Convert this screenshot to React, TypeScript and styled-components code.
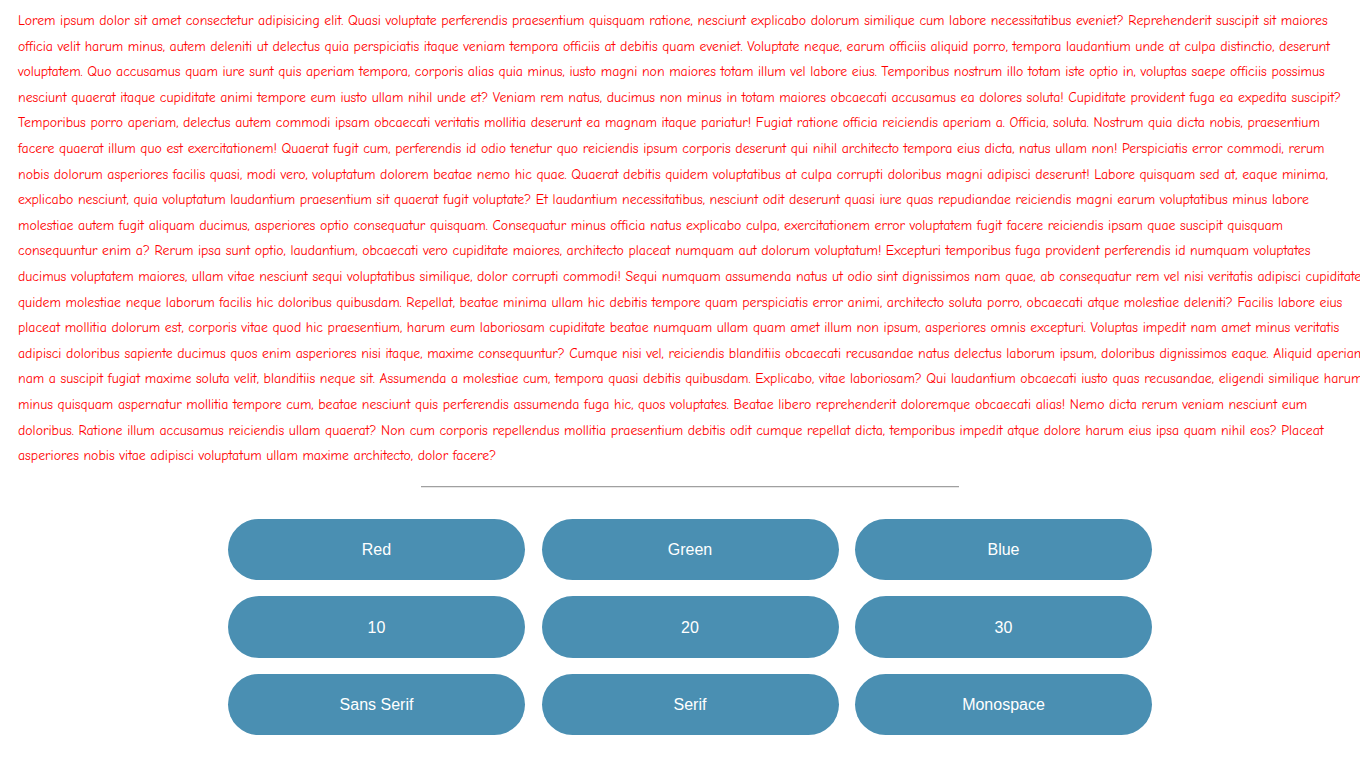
import React from "react";
import styled, { createGlobalStyle } from "styled-components";

const GlobalStyle = createGlobalStyle`
  html, body {
    overflow-x: hidden;
  }
  body {
    margin: 0;
    background: #ffffff;
    font-family: "Liberation Sans", Arial, sans-serif;
  }
`;

const Page = styled.div`
  width: 1344px;
  padding: 8px 0 0 18px;
`;

const Paragraph = styled.p`
  margin: 0;
  color: #ff0000;
  font-family: "Comic Sans MS", "Comic Neue", cursive;
  font-size: 13.8px;
  line-height: 25.6px;
`;

const Line = styled.span`
  display: block;
  white-space: nowrap;
`;

const Divider = styled.hr`
  width: 538px;
  margin: 17px auto 31px;
  border: 0;
  border-top: 1px solid #a0a0a0;
  border-bottom: 1px solid #e6e6e6;
  height: 0;
`;

const ButtonGrid = styled.div`
  display: grid;
  grid-template-columns: repeat(3, 297px);
  column-gap: 16.5px;
  row-gap: 16px;
  justify-content: center;
`;

const PillButton = styled.button`
  height: 61.5px;
  border: none;
  border-radius: 31px;
  background: #4a8fb2;
  color: #ffffff;
  font-family: "Liberation Sans", Arial, sans-serif;
  font-size: 16px;
  line-height: 18px;
  cursor: pointer;
  padding: 2px 0 0;
`;

const lines = [
  "Lorem ipsum dolor sit amet consectetur adipisicing elit. Quasi voluptate perferendis praesentium quisquam ratione, nesciunt explicabo dolorum similique cum labore necessitatibus eveniet? Reprehenderit suscipit sit maiores",
  "officia velit harum minus, autem deleniti ut delectus quia perspiciatis itaque veniam tempora officiis at debitis quam eveniet. Voluptate neque, earum officiis aliquid porro, tempora laudantium unde at culpa distinctio, deserunt",
  "voluptatem. Quo accusamus quam iure sunt quis aperiam tempora, corporis alias quia minus, iusto magni non maiores totam illum vel labore eius. Temporibus nostrum illo totam iste optio in, voluptas saepe officiis possimus",
  "nesciunt quaerat itaque cupiditate animi tempore eum iusto ullam nihil unde et? Veniam rem natus, ducimus non minus in totam maiores obcaecati accusamus ea dolores soluta! Cupiditate provident fuga ea expedita suscipit?",
  "Temporibus porro aperiam, delectus autem commodi ipsam obcaecati veritatis mollitia deserunt ea magnam itaque pariatur! Fugiat ratione officia reiciendis aperiam a. Officia, soluta. Nostrum quia dicta nobis, praesentium",
  "facere quaerat illum quo est exercitationem! Quaerat fugit cum, perferendis id odio tenetur quo reiciendis ipsum corporis deserunt qui nihil architecto tempora eius dicta, natus ullam non! Perspiciatis error commodi, rerum",
  "nobis dolorum asperiores facilis quasi, modi vero, voluptatum dolorem beatae nemo hic quae. Quaerat debitis quidem voluptatibus at culpa corrupti doloribus magni adipisci deserunt! Labore quisquam sed at, eaque minima,",
  "explicabo nesciunt, quia voluptatum laudantium praesentium sit quaerat fugit voluptate? Et laudantium necessitatibus, nesciunt odit deserunt quasi iure quas repudiandae reiciendis magni earum voluptatibus minus labore",
  "molestiae autem fugit aliquam ducimus, asperiores optio consequatur quisquam. Consequatur minus officia natus explicabo culpa, exercitationem error voluptatem fugit facere reiciendis ipsam quae suscipit quisquam",
  "consequuntur enim a? Rerum ipsa sunt optio, laudantium, obcaecati vero cupiditate maiores, architecto placeat numquam aut dolorum voluptatum! Excepturi temporibus fuga provident perferendis id numquam voluptates",
  "ducimus voluptatem maiores, ullam vitae nesciunt sequi voluptatibus similique, dolor corrupti commodi! Sequi numquam assumenda natus ut odio sint dignissimos nam quae, ab consequatur rem vel nisi veritatis adipisci cupiditate",
  "quidem molestiae neque laborum facilis hic doloribus quibusdam. Repellat, beatae minima ullam hic debitis tempore quam perspiciatis error animi, architecto soluta porro, obcaecati atque molestiae deleniti? Facilis labore eius",
  "placeat mollitia dolorum est, corporis vitae quod hic praesentium, harum eum laboriosam cupiditate beatae numquam ullam quam amet illum non ipsum, asperiores omnis excepturi. Voluptas impedit nam amet minus veritatis",
  "adipisci doloribus sapiente ducimus quos enim asperiores nisi itaque, maxime consequuntur? Cumque nisi vel, reiciendis blanditiis obcaecati recusandae natus delectus laborum ipsum, doloribus dignissimos eaque. Aliquid aperiam",
  "nam a suscipit fugiat maxime soluta velit, blanditiis neque sit. Assumenda a molestiae cum, tempora quasi debitis quibusdam. Explicabo, vitae laboriosam? Qui laudantium obcaecati iusto quas recusandae, eligendi similique harum",
  "minus quisquam aspernatur mollitia tempore cum, beatae nesciunt quis perferendis assumenda fuga hic, quos voluptates. Beatae libero reprehenderit doloremque obcaecati alias! Nemo dicta rerum veniam nesciunt eum",
  "doloribus. Ratione illum accusamus reiciendis ullam quaerat? Non cum corporis repellendus mollitia praesentium debitis odit cumque repellat dicta, temporibus impedit atque dolore harum eius ipsa quam nihil eos? Placeat",
  "asperiores nobis vitae adipisci voluptatum ullam maxime architecto, dolor facere?",
];

const buttons = ["Red", "Green", "Blue", "10", "20", "30", "Sans Serif", "Serif", "Monospace"];

export default function App() {
  return (
    <Page>
      <GlobalStyle />
      <Paragraph>
        {lines.map((l, i) => (
          <Line key={i}>{l}</Line>
        ))}
      </Paragraph>
      <Divider />
      <ButtonGrid>
        {buttons.map((b) => (
          <PillButton key={b}>{b}</PillButton>
        ))}
      </ButtonGrid>
    </Page>
  );
}
